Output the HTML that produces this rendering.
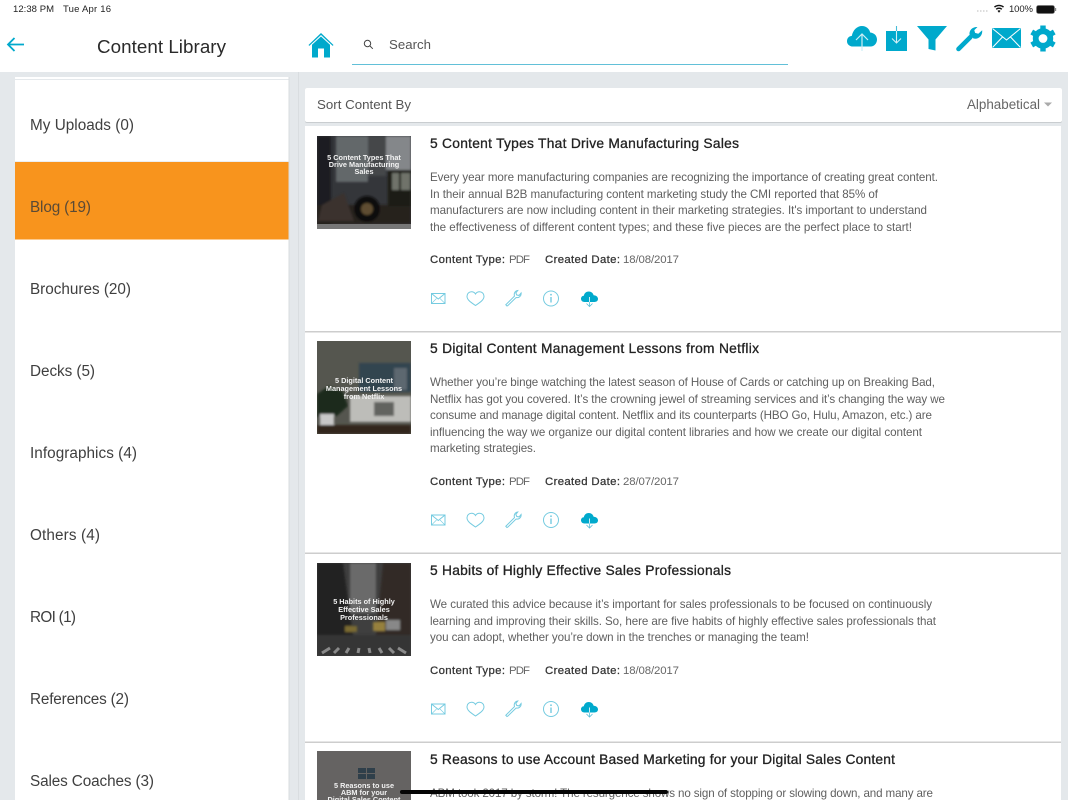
<!DOCTYPE html>
<html lang="en"><head><meta charset="utf-8"><title>Content Library</title>
<style>
html,body{margin:0;padding:0;width:1068px;height:800px;overflow:hidden;background:#e4e8eb}
svg{display:block;filter:blur(.3px)}
text{font-family:"Liberation Sans",sans-serif;white-space:pre}
.b{font-size:11.6px;fill:#5f5f5f}
.t{font-size:13.8px;fill:#222;stroke:#222;stroke-width:.3}
.m{font-size:11.4px;fill:#333;stroke:#333;stroke-width:.25}
.p{font-size:11.4px;fill:#666}
.s{font-size:15.3px;fill:#3f3f3f}
.th{font-size:7.3px;font-weight:bold;fill:#f2f2f2;text-anchor:middle}
.si{fill:none;stroke:#75cbe0;stroke-width:1}
</style></head><body>
<svg width="1068" height="800" viewBox="0 0 1068 800" xmlns="http://www.w3.org/2000/svg">
<defs>
<filter id="bl" x="-5%" y="-5%" width="110%" height="110%"><feGaussianBlur stdDeviation="1"/></filter>
<clipPath id="c1"><rect x="317" y="136" width="94" height="93"/></clipPath>
<clipPath id="c2"><rect x="317" y="341" width="94" height="93"/></clipPath>
<clipPath id="c3"><rect x="317" y="563" width="94" height="93"/></clipPath>
<g id="acts">
<g class="si"><rect x="431.500" y="293.500" width="13.500" height="10"/><path d="M431.500 293.500l6.800 5.500 6.700-5.500"/><path d="M431.500 303.500l5-5M445 303.500l-5-5" stroke-width=".6"/></g>
<path class="si" d="M475.500 305.500c-3.800-2.700-8.500-5.300-8.500-9.300 0-2.600 2.100-4.400 4.500-4.400 1.800 0 3.200.9 4 2.200.8-1.300 2.200-2.200 4-2.200 2.400 0 4.500 1.800 4.500 4.400 0 4-4.700 6.600-8.500 9.300z"/>
<path class="si" d="M507 306l-1.200-1.200 8.700-8.700c-.8-2.700.4-5.200 3.200-5.600l-1.900 2.400 1 2.100 2.300.4 2-2.400c.4 3-2.200 5.300-5 4.500l-8.300 8.100z"/>
<circle class="si" cx="551" cy="298.500" r="7.500"/><path d="M551 297v5.500" stroke="#75cbe0" stroke-width="1.400"/><circle cx="551" cy="294.700" r=".9" fill="#75cbe0"/>
<path d="M584.500 302c-2 0-3.500-1.300-3.500-3.200 0-1.700 1.200-2.900 2.800-3 .5-2.600 2.500-4.300 5-4.300 2.300 0 4.200 1.500 4.800 3.700 2.300 0 4.400 1.500 4.400 3.700 0 2.200-1.800 3.100-3.500 3.100z" fill="#00a9cc"/>
<path d="M589.500 297v5" fill="none" stroke="#fff" stroke-width=".8"/><path d="M589.500 302v4.500M586.500 303.500l3 3 3-3" fill="none" stroke="#59bdd6" stroke-width=".8"/>
</g>
</defs>

<rect width="1068" height="800" fill="#e4e8eb"/>
<rect width="1068" height="72" fill="#fff"/>
<!-- status bar -->
<text x="13" y="12" font-size="9.500" fill="#222" textLength="41">12:38 PM</text>
<text x="63" y="12" font-size="9.500" fill="#222" textLength="48">Tue Apr 16</text>
<path d="M977 11h1.500M980 11h1.500M983 11h1.500M986 11h1.500" stroke="#bbb" stroke-width="1"/>
<path d="M994 6.500a8 8 0 0 1 10 0l-.9 1.100a6.500 6.500 0 0 0-8.200 0zM995.700 8.700a5.200 5.200 0 0 1 6.600 0l-.9 1.100a3.800 3.800 0 0 0-4.800 0zM997.500 10.900a2.400 2.400 0 0 1 3 0L999 12.700z" fill="#111"/>
<text x="1009" y="12" font-size="9.500" fill="#222" textLength="24">100%</text>
<rect x="1036.500" y="5.500" width="18" height="8" rx="2" fill="#111" stroke="#777" stroke-width=".7"/><rect x="1055" y="8" width="1.200" height="3" fill="#888"/>

<!-- header -->
<path d="M8 44.500h16M14.500 38l-6.500 6.500 6.500 6.500" fill="none" stroke="#00a9cc" stroke-width="1.800"/>
<text x="97" y="53" font-size="18.800" fill="#2a2a2a" textLength="129">Content Library</text>
<path d="M321 33l12.500 12-.8.900L321 35 309.300 45.900l-.8-.9z" fill="#00a9cc"/>
<path d="M321 36.500l9 8.300V57.500h-6v-9h-6v9h-6V44.800z" fill="#00a9cc"/>
<circle cx="367.500" cy="43.500" r="3.200" fill="none" stroke="#444" stroke-width="1"/><path d="M370 46l2.800 2.800" stroke="#444" stroke-width="1"/>
<text x="389" y="49" font-size="13.200" fill="#555" textLength="42">Search</text>
<rect x="352" y="64" width="436" height="1" fill="#62c0d8"/>

<!-- top icons -->
<path d="M853 46.500c-3.500 0-6-2.300-6-5.300 0-2.900 2-5 4.800-5.300C853 30 857 26 862 26c4.300 0 7.300 2.800 8.200 6.500 3.900.4 6.800 3.100 6.800 7 0 4-3 7-6.300 7z" fill="#00a9cc"/>
<path d="M862 51V34M856 40l6-6 6 6" fill="none" stroke="#cdeef5" stroke-width="1.200"/>
<rect x="886" y="31" width="21" height="20" fill="#00a9cc"/><path d="M896.500 31v12M892 38.500l4.500 4.500 4.500-4.500" fill="none" stroke="#d5f0f6" stroke-width="1.100"/><path d="M896.500 26v5" stroke="#47bcd7" stroke-width="1.100"/>
<path d="M917 26h30l-11.500 13.500V50.500l-7-1.500V39.500z" fill="#00a9cc"/>
<path d="M958.500 49l11.800-11.800" stroke="#00a9cc" stroke-width="4.600" stroke-linecap="round" fill="none"/>
<path d="M977.500 27c-4.700-.4-8.500 3-8 7.600l4 3.900c4.700 1.200 9.300-2.700 8.700-8.300l-3.900 3.600-3.200-.9-.8-2.800z" fill="#00a9cc"/>
<rect x="992" y="28" width="29" height="20" fill="#00a9cc"/><path d="M992.500 28.500l14 11.500 14-11.500M992.500 47.500l10-10.500M1020.500 47.500l-10-10.500" fill="none" stroke="#fff" stroke-width="1"/>
<g transform="translate(1043 38.500)"><circle r="7.300" fill="none" stroke="#00a9cc" stroke-width="5.800"/><g fill="#00a9cc"><rect x="-2.700" y="-13" width="5.400" height="6"/><rect x="-2.700" y="7" width="5.400" height="6"/><g transform="rotate(60)"><rect x="-2.700" y="-13" width="5.400" height="6"/><rect x="-2.700" y="7" width="5.400" height="6"/></g><g transform="rotate(120)"><rect x="-2.700" y="-13" width="5.400" height="6"/><rect x="-2.700" y="7" width="5.400" height="6"/></g></g></g>

<!-- sidebar -->
<rect x="298" y="72" width="1" height="728" fill="#d9dde0"/>
<rect x="15" y="77" width="273.500" height="723" fill="#fff"/>
<rect x="15" y="79" width="273.500" height="1" fill="#e4e8eb"/>
<rect x="288.500" y="77" width="1" height="723" fill="#d8dcdf"/>
<rect x="15" y="161" width="273.500" height="1" fill="#eceef0"/>
<rect x="15" y="162" width="273.500" height="77.500" fill="#f8941d"/>
<text class="s" x="30" y="130" textLength="104">My Uploads (0)</text>
<text class="s" x="30" y="212" textLength="61" style="fill:#5a4a36">Blog (19)</text>
<text class="s" x="30" y="294" textLength="101">Brochures (20)</text>
<text class="s" x="30" y="376" textLength="65">Decks (5)</text>
<text class="s" x="30" y="458" textLength="107">Infographics (4)</text>
<text class="s" x="30" y="540" textLength="70">Others (4)</text>
<text class="s" x="30" y="622" textLength="46">ROI (1)</text>
<text class="s" x="30" y="704" textLength="99">References (2)</text>
<text class="s" x="30" y="786" textLength="124">Sales Coaches (3)</text>

<!-- sort bar -->
<rect x="305" y="88" width="757" height="35" rx="2" fill="#c9cdd0"/>
<rect x="305" y="88" width="757" height="34" rx="2" fill="#fff"/>
<text x="317" y="109" font-size="13.300" fill="#555" textLength="94">Sort Content By</text>
<text x="967" y="109" font-size="13.400" fill="#666" textLength="73">Alphabetical</text>
<path d="M1044 102.500h8l-4 4z" fill="#aaa"/>

<!-- list -->
<rect x="305" y="126" width="756" height="674" fill="#fff"/>
<rect x="305" y="331" width="756" height="1.500" fill="#cdcdcd"/>
<rect x="305" y="552.500" width="756" height="1.500" fill="#cdcdcd"/>
<rect x="305" y="741.500" width="756" height="1.500" fill="#cdcdcd"/>

<!-- thumb 1 -->
<g clip-path="url(#c1)"><rect x="317" y="136" width="94" height="93" fill="#34363a"/>
<g filter="url(#bl)"><rect x="317" y="136" width="14" height="93" fill="#1d1f22"/><rect x="336" y="136" width="32" height="46" fill="#64676a"/><rect x="368" y="136" width="18" height="40" fill="#44474a"/><rect x="386" y="136" width="25" height="34" fill="#84878a"/><rect x="317" y="205" width="94" height="19" fill="#25221f"/><circle cx="367" cy="209" r="13" fill="#111"/><circle cx="367" cy="209" r="6" fill="#5e4e30"/><rect x="388" y="170" width="23" height="36" fill="#1f1d16"/><rect x="392" y="173" width="7" height="17" fill="#70736a"/><rect x="401" y="173" width="9" height="17" fill="#70736a"/><path d="M322 205l22-12 10 28h-36z" fill="#3a332d"/></g>
<rect x="317" y="224" width="94" height="5" fill="#777"/></g>
<text class="th" x="364" y="160">5 Content Types That</text><text class="th" x="364" y="167">Drive Manufacturing</text><text class="th" x="364" y="174">Sales</text>
<!-- item 1 -->
<text class="t" x="430" y="148" textLength="309">5 Content Types That Drive Manufacturing Sales</text>
<text class="b" x="430" y="181" textLength="508">Every year more manufacturing companies are recognizing the importance of creating great content.</text>
<text class="b" x="430" y="198" textLength="448">In their annual B2B manufacturing content marketing study the CMI reported that 85% of</text>
<text class="b" x="430" y="214" textLength="497">manufacturers are now including content in their marketing strategies. It's important to understand</text>
<text class="b" x="430" y="231" textLength="482">the effectiveness of different content types; and these five pieces are the perfect place to start!</text>
<text class="m" x="430" y="263" textLength="75">Content Type:</text><text class="p" x="509" y="263" textLength="21">PDF</text>
<text class="m" x="545" y="263" textLength="75">Created Date:</text><text class="p" x="623" y="263" textLength="56">18/08/2017</text>
<use href="#acts"/>

<!-- thumb 2 -->
<g clip-path="url(#c2)"><rect x="317" y="341" width="94" height="93" fill="#55564f"/>
<g filter="url(#bl)"><rect x="359" y="363" width="52" height="29" fill="#33444f"/><rect x="394" y="368" width="13" height="22" fill="#5d6870"/><rect x="350" y="396" width="61" height="26" fill="#bdbdb9"/><rect x="374" y="402" width="20" height="14" fill="#62645f"/><path d="M317 394l12-8 14 6 5 14-10 9-8 4-13-2z" fill="#1f2b1c"/><rect x="320" y="414" width="14" height="14" fill="#c8c8c8"/><rect x="317" y="425" width="94" height="9" fill="#33281f"/></g></g>
<text class="th" x="364" y="383">5 Digital Content</text><text class="th" x="364" y="391">Management Lessons</text><text class="th" x="364" y="399">from Netflix</text>
<!-- item 2 -->
<text class="t" x="430" y="353" textLength="329">5 Digital Content Management Lessons from Netflix</text>
<text class="b" x="430" y="386" textLength="505">Whether you’re binge watching the latest season of House of Cards or catching up on Breaking Bad,</text>
<text class="b" x="430" y="403" textLength="515">Netflix has got you covered. It’s the crowning jewel of streaming services and it’s changing the way we</text>
<text class="b" x="430" y="419" textLength="502">consume and manage digital content. Netflix and its counterparts (HBO Go, Hulu, Amazon, etc.) are</text>
<text class="b" x="430" y="436" textLength="492">influencing the way we organize our digital content libraries and how we create our digital content</text>
<text class="b" x="430" y="452" textLength="106">marketing strategies.</text>
<text class="m" x="430" y="485" textLength="75">Content Type:</text><text class="p" x="509" y="485" textLength="21">PDF</text>
<text class="m" x="545" y="485" textLength="75">Created Date:</text><text class="p" x="623" y="485" textLength="56">28/07/2017</text>
<use href="#acts" y="221.500"/>

<!-- thumb 3 -->
<g clip-path="url(#c3)"><rect x="317" y="563" width="94" height="93" fill="#3f3f3f"/>
<g filter="url(#bl)"><path d="M317 563h26l10 72h-36z" fill="#242220"/><path d="M411 563h-28l-7 72h35z" fill="#322a28"/><rect x="350" y="563" width="26" height="50" fill="#6a6a6a"/><rect x="317" y="635" width="94" height="21" fill="#343434"/><rect x="345" y="626" width="12" height="6" fill="#7a6a30"/><rect x="373" y="622" width="12" height="9" fill="#96803c"/><rect x="386" y="620" width="14" height="10" fill="#888"/></g>
<path d="M322 653l8-5M334 653l5-5M346 653l3-5M358 653l1-5M370 653l-1-5M382 653l-3-5M394 653l-5-5M406 653l-8-5" stroke="#8a8a8a" stroke-width="3"/></g>
<text class="th" x="364" y="604">5 Habits of Highly</text><text class="th" x="364" y="612">Effective Sales</text><text class="th" x="364" y="620">Professionals</text>
<!-- item 3 -->
<text class="t" x="430" y="575" textLength="301">5 Habits of Highly Effective Sales Professionals</text>
<text class="b" x="430" y="608" textLength="502">We curated this advice because it’s important for sales professionals to be focused on continuously</text>
<text class="b" x="430" y="625" textLength="506">learning and improving their skills. So, here are five habits of highly effective sales professionals that</text>
<text class="b" x="430" y="641" textLength="379">you can adopt, whether you’re down in the trenches or managing the team!</text>
<text class="m" x="430" y="674" textLength="75">Content Type:</text><text class="p" x="509" y="674" textLength="21">PDF</text>
<text class="m" x="545" y="674" textLength="75">Created Date:</text><text class="p" x="623" y="674" textLength="56">18/08/2017</text>
<use href="#acts" y="410.500"/>

<!-- thumb 4 -->
<rect x="317" y="751" width="94" height="49" fill="#656362"/>
<rect x="358" y="768" width="8" height="5" fill="#2f3f4a"/><rect x="367" y="768" width="8" height="5" fill="#2f3f4a"/><rect x="358" y="774" width="8" height="5" fill="#2f3f4a"/><rect x="367" y="774" width="8" height="5" fill="#2f3f4a"/>
<text class="th" x="364" y="788">5 Reasons to use</text><text class="th" x="364" y="795">ABM for your</text><text class="th" x="364" y="802">Digital Sales Content</text>
<!-- item 4 -->
<text class="t" x="430" y="764" textLength="465">5 Reasons to use Account Based Marketing for your Digital Sales Content</text>
<text class="b" x="430" y="797" textLength="503">ABM took 2017 by storm! The resurgence shows no sign of stopping or slowing down, and many are</text>

<!-- home indicator -->
<rect x="400" y="790" width="268" height="4" rx="2" fill="#050505"/>
</svg>
</body></html>
